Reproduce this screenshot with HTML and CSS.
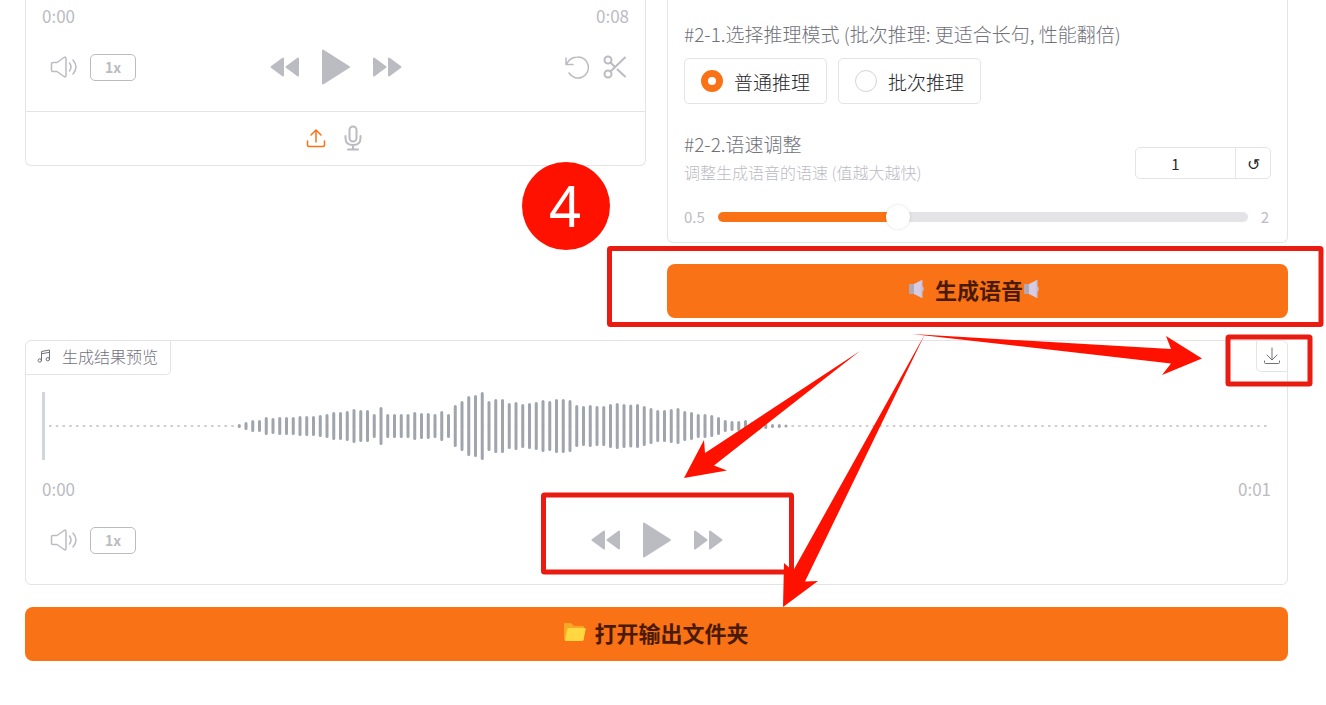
FILE: index.html
```
<!DOCTYPE html>
<html lang="zh-CN">
<head>
  <meta charset="UTF-8">
  <meta name="viewport" content="width=device-width, initial-scale=1.0">
  <title>语音合成</title>
  <link rel="stylesheet" href="styles.css">
</head>
<body>
  <!-- 图标 -->
  <svg class="sprite" aria-hidden="true">
    <symbol id="volume" viewBox="0 0 28 24">
      <path d="M1.500 8.500Q1.500 7.500 3 7.500H7L14 2.500Q16 1.500 16 3.500V20.500Q16 22.500 14 21.500L7 16.500H3Q1.500 16.500 1.500 15.500Z"/>
      <path d="M19.500 8Q22.500 12 19.500 16M23 5Q29 12 23 19"/>
    </symbol>
    <symbol id="rewind" viewBox="0 0 30 20">
      <path d="M13 1.500V18.500L1.500 10ZM28 1.500V18.500L16.500 10Z"/>
    </symbol>
    <symbol id="play" viewBox="0 0 28 36">
      <path d="M1 1.500V34.500L27 18Z"/>
    </symbol>
    <symbol id="forward" viewBox="0 0 30 20">
      <path d="M2 1.500V18.500L13.500 10ZM17 1.500V18.500L28.500 10Z"/>
    </symbol>
  </svg>

  <main class="page">
    <div class="columns">
      <section class="card card-open">
        <div class="player">
          <div class="times"><span>0:00</span><span>0:08</span></div>
          <div class="controls">
            <div class="control-group">
              <button class="icon-btn" aria-label="音量"><svg class="line-icon volume"><use href="#volume"/></svg></button>
              <button class="speed">1x</button>
            </div>
            <div class="transport">
              <button class="icon-btn" aria-label="后退"><svg class="fill-icon skip"><use href="#rewind"/></svg></button>
              <button class="icon-btn" aria-label="播放"><svg class="fill-icon play"><use href="#play"/></svg></button>
              <button class="icon-btn" aria-label="前进"><svg class="fill-icon skip"><use href="#forward"/></svg></button>
            </div>
            <div class="control-group edit">
              <button class="icon-btn" aria-label="重置">
                <svg class="line-icon tool" viewBox="0 0 24 24"><path d="M1 3V9.500H8M1.500 9C4 4 8 2 12.500 2A10.500 10.500 0 1 1 4 18"/></svg>
              </button>
              <button class="icon-btn" aria-label="裁剪">
                <svg class="line-icon tool bold" viewBox="0 0 24 24"><circle cx="5" cy="5" r="3.500"/><circle cx="5" cy="19" r="3.500"/><path d="M22 2.500L7.500 16.500M7.500 7.500L11 11M14.500 14.500L22 21.500"/></svg>
              </button>
            </div>
          </div>
        </div>
        <div class="sources">
          <button class="icon-btn active" aria-label="上传">
            <svg class="line-icon upload" viewBox="0 0 20 20"><path d="M10 14V2M5 7L10 2L15 7M1.500 13V17Q1.500 18.500 3 18.500H17Q18.500 18.500 18.500 17V13"/></svg>
          </button>
          <button class="icon-btn" aria-label="录音">
            <svg class="line-icon mic bold" viewBox="0 0 18 26"><rect x="5.500" y="1.500" width="7" height="15" rx="3.500"/><path d="M1.500 11V13Q1.500 20 9 20Q16.500 20 16.500 13V11M9 20V24.500M4 24.500H14"/></svg>
          </button>
        </div>
      </section>

      <div class="settings">
        <section class="card card-open options">
          <fieldset class="mode">
            <legend>#2-1.选择推理模式 (批次推理: 更适合长句, 性能翻倍)</legend>
            <div class="choices">
              <label class="choice"><input type="radio" name="mode" checked>普通推理</label>
              <label class="choice"><input type="radio" name="mode">批次推理</label>
            </div>
          </fieldset>
          <div class="speed-head">
            <label for="speed-number">
              <span class="title">#2-2.语速调整</span>
              <span class="info">调整生成语音的语速 (值越大越快)</span>
            </label>
            <div class="number">
              <input type="number" id="speed-number" value="1" min="0.5" max="2" step="0.1">
              <button aria-label="恢复默认">↺</button>
            </div>
          </div>
          <div class="slider">
            <span>0.5</span>
            <input type="range" min="0.5" max="2" step="0.1" value="1" aria-label="语速调整">
            <span>2</span>
          </div>
        </section>
        <button class="primary">
          <svg class="horn" viewBox="0 0 18 18"><path fill="#b3a9b5" d="M1 5Q1 4 2 4H6V14H2Q1 14 1 13Z"/><path fill="#d5cbe2" d="M6 4L14 0V18L6 14Z"/><path fill="#c9bfd6" d="M13 0H14.500V6Q17 9 14.500 12V18H13Z"/></svg>
          <span>生成语音</span>
          <svg class="horn tight" viewBox="0 0 18 18"><path fill="#b3a9b5" d="M1 5Q1 4 2 4H6V14H2Q1 14 1 13Z"/><path fill="#d5cbe2" d="M6 4L14 0V18L6 14Z"/><path fill="#c9bfd6" d="M13 0H14.500V6Q17 9 14.500 12V18H13Z"/></svg>
        </button>
      </div>
    </div>

    <section class="card">
      <div class="result-head">
        <h2 class="tab">
          <svg class="line-icon note" viewBox="0 0 14 14"><path d="M4.500 11.500V2.500L12.500 1V10M4.500 4.800L12.500 3.300"/><circle cx="2.800" cy="11.500" r="1.700"/><circle cx="10.800" cy="10.200" r="1.700"/></svg>
          生成结果预览
        </h2>
        <a class="download" href="#" aria-label="下载">
          <svg class="line-icon" viewBox="0 0 18 18"><path d="M9 1V12.500M4 8L9 13L14 8M1.500 14V15.500Q1.500 16.500 2.500 16.500H15.500Q16.500 16.500 16.500 15.500V14"/></svg>
        </a>
      </div>
      <div class="player result">
        <svg class="wave" id="wave" viewBox="0 0 1229 68" preserveAspectRatio="none">
          <path class="silence" d="M7 34H1226"/>
          <path class="bars" id="bars"/>
          <path class="cursor" d="M1.500 0V68"/>
        </svg>
        <div class="times"><span>0:00</span><span>0:01</span></div>
        <div class="controls">
          <div class="control-group">
            <button class="icon-btn" aria-label="音量"><svg class="line-icon volume"><use href="#volume"/></svg></button>
            <button class="speed">1x</button>
          </div>
          <div class="transport">
            <button class="icon-btn" aria-label="后退"><svg class="fill-icon skip"><use href="#rewind"/></svg></button>
            <button class="icon-btn" aria-label="播放"><svg class="fill-icon play"><use href="#play"/></svg></button>
            <button class="icon-btn" aria-label="前进"><svg class="fill-icon skip"><use href="#forward"/></svg></button>
          </div>
        </div>
      </div>
    </section>

    <button class="primary">
      <svg class="folder" viewBox="0 0 22 20"><path fill="#f9a825" d="M0 2Q0 1 1 1H7L10 4H19Q20 4 20 5V18H1Q0 18 0 17Z"/><path fill="#ffd740" d="M4.500 6H21Q22 6 21.700 7L19.500 18Q19.300 19 18 19H1.500Q.8 19 1 18L3.300 7Q3.500 6 4.500 6Z"/></svg>
      <span>打开输出文件夹</span>
    </button>

    <!-- 第四步标注 -->
    <svg class="marks" viewBox="0 0 1326 705">
      <g class="frames">
        <rect x="609.500" y="248.500" width="711.500" height="76" rx="1"/>
        <rect x="1228" y="337" width="82" height="47" rx="1"/>
        <rect x="543.500" y="495" width="248" height="77" rx="1"/>
      </g>
      <g class="arrows">
        <path d="M860 351L705 453L704 440L684 478L727 470.500L714 465.500Z"/>
        <path d="M925 334L793 571L784 563L783 607L818 581L805 581.500Z"/>
        <path d="M912 334L1171 349L1166 336L1202 358.500L1162 375L1171 363.500Z"/>
        <circle cx="566" cy="206" r="44"/>
      </g>
      <text x="565" y="227">4</text>
    </svg>
  </main>

  <script src="wave.js"></script>
</body>
</html>
```

FILE: styles.css
```
* {
  box-sizing: border-box;
}
body {
  margin: 0;
  background-color: #fff;
  color: #27272a;
  font-family: "Noto Sans CJK SC", sans-serif;
  font-size: 16px;
  font-weight: 300;
}
button, input {
  font: inherit;
  color: inherit;
}
button {
  cursor: pointer;
}
.sprite {
  position: absolute;
  width: 0;
  height: 0;
}
.page {
  position: relative;
  display: flex;
  flex-direction: column;
  gap: 22px;
  padding: 0 38px 44px 25px;
}
.columns {
  display: grid;
  grid-template-columns: 1fr 1fr;
  gap: 21px;
  align-items: start;
}
.settings {
  display: flex;
  flex-direction: column;
  gap: 21px;
}
.card {
  border: 1px solid #e4e4e7;
  border-radius: 6px;
}
.card-open {
  border-top: none;
  border-radius: 0 0 6px 6px;
}

/* player */
.player {
  padding: 4px 16px 21px;
}
.times {
  display: flex;
  justify-content: space-between;
  color: #bbbbc2;
  font-size: 17px;
  font-weight: 400;
  line-height: 24px;
}
.controls {
  display: grid;
  grid-template-columns: 1fr auto 1fr;
  align-items: center;
  height: 46px;
  margin-top: 16px;
}
.control-group {
  display: flex;
  align-items: center;
  gap: 12px;
  padding-left: 8px;
}
.edit {
  justify-content: flex-end;
  gap: 14px;
  padding: 0 2px 0 0;
}
.transport {
  display: flex;
  align-items: center;
  gap: 22px;
}
.icon-btn {
  display: flex;
  padding: 0;
  border: none;
  background: none;
  color: #bbbbc2;
}
.line-icon {
  fill: none;
  stroke: currentColor;
  stroke-width: 1.5;
  stroke-linecap: round;
  stroke-linejoin: round;
}
.fill-icon {
  fill: currentColor;
  stroke: currentColor;
  stroke-width: 2;
  stroke-linejoin: round;
}
.volume {
  width: 28px;
  height: 24px;
}
.skip {
  width: 30px;
  height: 20px;
}
.play {
  width: 28px;
  height: 36px;
}
.tool {
  width: 24px;
  height: 24px;
  overflow: visible;
}
.bold {
  stroke-width: 2;
}
.speed {
  width: 46px;
  height: 27px;
  padding: 0;
  border: 1px solid #bbbbc2;
  border-radius: 5px;
  background: none;
  color: #bbbbc2;
  font-size: 14px;
  font-weight: 700;
  line-height: 24px;
}
.sources {
  display: flex;
  justify-content: center;
  align-items: center;
  gap: 18px;
  height: 54px;
  padding: 0 3px 2px 0;
  border-top: 1px solid #e4e4e7;
}
.sources .active {
  color: #f97316;
}
.upload {
  width: 20px;
  height: 20px;
}
.mic {
  width: 18px;
  height: 26px;
}

/* options */
.options {
  padding: 20px 16px 12px;
}
.mode {
  margin: 0;
  padding: 0;
  border: none;
}
.mode legend, .title {
  padding: 0;
  color: #71717a;
  font-size: 19px;
  line-height: 28px;
}
.choices {
  display: flex;
  gap: 11px;
  margin-top: 10px;
}
.choice {
  display: flex;
  align-items: center;
  gap: 11px;
  height: 46px;
  padding: 0 16px;
  border: 1px solid #e4e4e7;
  border-radius: 5px;
  font-size: 19px;
}
.choice input {
  appearance: none;
  width: 22px;
  height: 22px;
  margin: 0;
  border: 1px solid #d4d4d8;
  border-radius: 50%;
}
.choice input:checked {
  border: 7px solid #f97316;
}
.speed-head {
  display: flex;
  justify-content: space-between;
  align-items: center;
  margin-top: 26px;
}
.title, .info {
  display: block;
}
.info {
  margin-top: 2px;
  color: #bbbbc2;
  line-height: 24px;
}
.number {
  display: flex;
  height: 32px;
  margin-top: 12px;
  border: 1px solid #e4e4e7;
  border-radius: 5px;
}
.number input {
  width: 99px;
  padding: 0 20px 0 0;
  border: none;
  background: none;
  font-size: 15px;
  font-weight: 400;
  text-align: center;
  appearance: textfield;
}
.number input::-webkit-inner-spin-button {
  display: none;
}
.number button {
  width: 35px;
  padding: 0;
  border: none;
  border-left: 1px solid #e4e4e7;
  background: none;
}
.slider {
  display: flex;
  align-items: center;
  gap: 13px;
  margin-top: 20px;
  padding-right: 2px;
  color: #bbbbc2;
  font-size: 15px;
  font-weight: 400;
  line-height: 26px;
}
.slider input {
  flex: 1;
  appearance: none;
  height: 10px;
  margin: 0;
  border-radius: 5px;
  background: linear-gradient(to right, #f97316 34%, #e4e4e7 34%);
}
.slider input::-webkit-slider-thumb {
  appearance: none;
  width: 24px;
  height: 24px;
  border-radius: 50%;
  background-color: #fff;
  box-shadow: 0 0 3px rgba(0, 0, 0, 0.15);
}

.primary {
  display: flex;
  justify-content: center;
  align-items: center;
  height: 54px;
  padding: 0 0 4px;
  border: none;
  border-radius: 8px;
  background-color: #f97316;
  color: #4a1a05;
  font-size: 22px;
  font-weight: 700;
}
.horn {
  width: 18px;
  height: 18px;
  margin-right: 9px;
}
.tight {
  margin: 0 6px 0 0;
}
.folder {
  width: 22px;
  height: 20px;
  margin-right: 8px;
}

/* result */
.result-head {
  display: flex;
  justify-content: space-between;
  align-items: flex-start;
}
.tab {
  display: flex;
  align-items: center;
  gap: 11px;
  height: 34px;
  margin: 0;
  padding: 0 12px 3px 11px;
  border: 1px solid #e4e4e7;
  border-width: 0 1px 1px 0;
  border-radius: 0 0 5px 0;
  color: #71717a;
  font-size: 16px;
  font-weight: 300;
}
.note {
  width: 14px;
  height: 14px;
  stroke-width: 1;
}
.download {
  display: flex;
  justify-content: center;
  align-items: center;
  width: 31px;
  height: 31px;
  border: 1px solid #e4e4e7;
  border-width: 0 0 1px 1px;
  border-radius: 0 0 0 5px;
  color: #71717a;
}
.download svg {
  width: 18px;
  height: 18px;
  stroke-width: 1;
}
.result {
  padding-top: 17px;
}
.wave {
  display: block;
  width: 100%;
  height: 68px;
  margin-bottom: 17px;
}
.wave path {
  fill: none;
  stroke-width: 3;
}
.wave .silence {
  stroke: #cdcdd2;
  stroke-width: 2;
  stroke-dasharray: 2.5 4.25;
}
.wave .bars {
  stroke: #a0a5ad;
  stroke-linecap: round;
}
.wave .cursor {
  stroke: #d4d4dc;
}

.marks {
  position: absolute;
  top: 0;
  left: 0;
  width: 100%;
  pointer-events: none;
}
.frames {
  fill: none;
  stroke: #ea1b10;
  stroke-width: 5;
}
.arrows {
  fill: #ff1100;
}
.marks text {
  fill: #fff;
  font-family: "Noto Sans", sans-serif;
  font-size: 56px;
  font-weight: 400;
  text-anchor: middle;
}
```

FILE: wave.js
```
const heights = [
  4, 8, 12, 12, 18, 16, 18, 18, 18, 20, 20, 20, 22, 24, 28, 28, 30, 34, 32, 32,
  24, 38, 24, 24, 24, 24, 28, 26, 26, 24, 30, 24, 42, 50, 60, 62, 68, 50, 54, 54,
  46, 48, 44, 46, 48, 52, 50, 54, 54, 52, 42, 40, 42, 40, 40, 44, 46, 44, 43, 44,
  40, 36, 32, 32, 34, 36, 30, 28, 24, 24, 22, 18, 12, 10, 10, 12, 8, 8, 6, 4, 4, 3
];
const step = 6.75;
const first = 29;

const d = heights.map((h, i) => {
  const x = 1.5 + (first + i) * step;
  const half = Math.max(h - 3, 0.1) / 2;
  return `M${x} ${34 - half}V${34 + half}`;
}).join("");

document.getElementById("bars").setAttribute("d", d);
```
